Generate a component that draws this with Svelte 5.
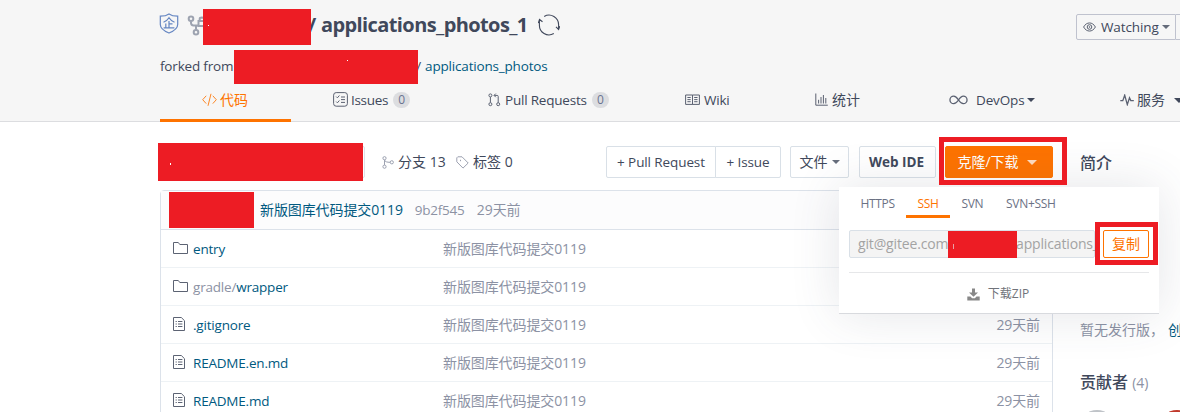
<script>
  const tabs = [
    { icon: 'code', label: '代码', active: true },
    { icon: 'issues', label: 'Issues', count: 0 },
    { icon: 'pr', label: 'Pull Requests', count: 0 },
    { icon: 'wiki', label: 'Wiki' },
    { icon: 'chart', label: '统计' },
    { icon: 'devops', label: 'DevOps', caret: true },
    { icon: 'pulse', label: '服务', caret: true }
  ];
  const message = '新版图库代码提交0119';
  const files = [
    { icon: 'folder', name: 'entry' },
    { icon: 'folder', prefix: 'gradle/', name: 'wrapper' },
    { icon: 'file', name: '.gitignore' },
    { icon: 'file', name: 'README.en.md' },
    { icon: 'file', name: 'README.md' }
  ];
</script>

{#snippet icon(name)}
  {#if name === 'code'}
    <svg class="ic" width="15" height="14" viewBox="0 0 15 14"><path d="M4.2 2.8.7 6.7l3.5 3.9M10.8 2.8l3.5 3.9-3.5 3.9M9 .8 6 12.8" /></svg>
  {:else if name === 'issues'}
    <svg class="ic" width="15" height="15" viewBox="0 0 15 15"><rect x=".6" y=".6" width="13.8" height="13.6" rx="2.6" /><path d="m3.2 4.6 1.2 1.2 2-2.3M8 5h4M8 7.6h4M3.2 9.6l1.2 1.2 2-2.3M8 10.4h4" /></svg>
  {:else if name === 'pr'}
    <svg class="ic" width="13" height="14" viewBox="0 0 13 14"><circle cx="2.4" cy="2.4" r="1.5" /><circle cx="2.4" cy="11.2" r="1.5" /><circle cx="10.2" cy="11.2" r="1.5" /><path d="M2.4 4v5.6M10.2 9.6V3.4c0-.7-.4-1-1-1H6.2M7.8.6 6 2.4l1.8 1.8" /></svg>
  {:else if name === 'wiki'}
    <svg class="ic" width="15" height="12" viewBox="0 0 15 12"><path d="M.6 1h6.9v9.4H.6zM7.5 1h6.9v9.4H7.5zM2.4 3.5h3.3M2.4 5.6h3.3M2.4 7.7h3.3M9.2 3.5h3.3M9.2 5.6h3.3M9.2 7.7h3.3" /></svg>
  {:else if name === 'chart'}
    <svg class="ic" width="13" height="13" viewBox="0 0 13 13"><path d="M.8.5v11.7h12M3.6 10.5V6.8M6 10.5V4M8.4 10.5V2M10.8 10.5V5" /></svg>
  {:else if name === 'devops'}
    <svg class="ic bold" width="19" height="10" viewBox="0 0 19 10"><path d="M9.5 5C8 2.7 6.600 1.200 4.700 1.200a3.700 3.700 0 0 0 0 7.500C6.600 8.700 8 7.200 9.500 5s2.900-3.800 4.800-3.800a3.700 3.700 0 0 1 0 7.500c-1.900 0-3.300-1.500-4.800-3.700z" /></svg>
  {:else if name === 'pulse'}
    <svg class="ic bold" width="14" height="12" viewBox="0 0 14 12"><path d="M.3 6.600h2.500L4.700 1.200l2.600 9.400L9.500 3.800l1.300 2.800h3" /></svg>
  {:else if name === 'folder'}
    <svg class="ic" width="15" height="12" viewBox="0 0 15 12"><path d="M.5 11.500V.5h4.800l1.500 2h7.700v9z" /></svg>
  {:else if name === 'file'}
    <svg class="ic" width="12" height="14" viewBox="0 0 12 14"><path d="M.5.5h7.800l3.200 3.200v9.800H.5zM2.600 4.500h1.200M5 4.500h4.400M2.600 7h1.200M5 7h4.400M2.600 9.500h1.200M5 9.500h4.400" /></svg>
  {/if}
{/snippet}

<div class="page">
  <header>
    <div class="title">
      <svg class="shield" width="20" height="21" viewBox="0 0 20 21"><path d="M10 .9c2.300 1.700 5.500 2.300 8.700 2.300v8.300c0 4.100-4 6.600-8.700 8.500-4.700-1.900-8.700-4.400-8.700-8.500V3.200C4.500 3.200 7.700 2.600 10 .9z" /><path d="M4.500 9.200C7 8.200 9 6.500 10 4.800c1 1.700 3 3.400 5.500 4.400M10 8v6.800M10 10.800h3.500M6.800 10.500v4.300M4.600 14.900h10.800" /></svg>
      <svg class="fork" width="20" height="21" viewBox="0 0 20 21"><circle cx="4" cy="3.800" r="2.300" /><circle cx="9" cy="17.200" r="2.300" /><path d="M4 6.200v1.600c0 1.600 1 2.700 2.600 2.700H9v4.300M9 10.500h3M11.500 6h7v5h-7zM12.700 6V3.700c0-1.500 4.500-1.500 4.500 0V6" /></svg>
      <h1><span class="slash">/</span>applications_photos_1</h1>
      <svg class="sync" width="22" height="22" viewBox="0 0 22 22"><path d="M6.200 2.400A9.600 9.600 0 0 1 20.600 11v4M15.800 19.600A9.600 9.600 0 0 1 1.400 11V6M18 12.800l2.600 2.600 1.200-3.200M.3 9l1.200-3.500 3 2.300" /></svg>
      <div class="watch"><svg class="ic" width="13" height="10" viewBox="0 0 13 10"><path d="M.6 5C3.500-.4 9.500-.4 12.400 5 9.500 10.400 3.500 10.400.6 5z" /><circle cx="6.500" cy="5" r="2.300" /><circle cx="6.500" cy="5" r=".4" /></svg><span>Watching</span><i class="caret"></i></div>
      <div class="watch-count"></div>
    </div>
    <div class="origin"><span>forked from</span><span class="sep">/</span><a href="#origin">applications_photos</a></div>
    <nav>
      {#each tabs as tab}
        <div class="tab {tab.icon}" class:active={tab.active}>
          {@render icon(tab.icon)}
          <span>{tab.label}</span>
          {#if tab.count !== undefined}<b class="count">{tab.count}</b>{/if}
          {#if tab.caret}<i class="caret"></i>{/if}
        </div>
      {/each}
    </nav>
  </header>

  <main>
    <section class="repo">
      <div class="toolbar">
        <div class="select"></div>
        <div class="stat branch"><svg class="ic muted" width="12" height="13" viewBox="0 0 12 13"><circle cx="2.500" cy="2.200" r="1.600" /><circle cx="2.500" cy="10.700" r="1.600" /><circle cx="9.800" cy="6.300" r="1.600" /><path d="M2.500 3.800v5.300M2.500 4c.5 1.800 2.500 2.300 5.700 2.300" /></svg><span>分支 13</span></div>
        <div class="stat"><svg class="ic muted" width="13" height="13" viewBox="0 0 13 13"><path d="M.8 1.800v4l6.200 6.300 5.200-5.100L6 .8H1.800zM4.500 3.800v1.400" /></svg><span>标签 0</span></div>
        <div class="group">
          <div class="btn pull">+ Pull Request</div>
          <div class="btn issue">+ Issue</div>
        </div>
        <div class="btn doc"><span>文件</span><i class="caret"></i></div>
        <div class="btn ide">Web IDE</div>
        <div class="btn clone"><span>克隆/下载</span><i class="caret"></i></div>
      </div>

      <div class="panel">
        <div class="commit"><a href="#commit">{message}</a><span class="hash">9b2f545</span><span>29天前</span></div>
        {#each files as f}
          <div class="row">
            {@render icon(f.icon)}
            <div class="name"><span>{f.prefix ?? ''}</span>{f.name}</div>
            <div class="msg">{message}</div>
            <div class="date">29天前</div>
          </div>
        {/each}
      </div>
    </section>

    <aside>
      <h2>简介</h2>
      <p><span>暂无发行版，</span><a href="#create">创</a></p>
      <h2 class="people">贡献者 <small>(4)</small></h2>
      <div class="avatars"><i></i><i class="red"></i></div>
    </aside>
  </main>

  <div class="menu">
    <div class="protocols"><span>HTTPS</span><span class="on">SSH</span><span>SVN</span><span>SVN+SSH</span></div>
    <div class="url"><div class="input"><span class="host">git@gitee.com</span><span>applications_</span></div><div class="copy">复制</div></div>
    <div class="zip"><svg width="13" height="13" viewBox="0 0 13 13"><path d="M5 .5h3v4h3L6.500 8.800 2 4.500h3zM.3 8.500h3.200l1.600 1.700h2.800l1.600-1.700h3.200v4H.3z" /></svg><span>下载ZIP</span></div>
  </div>

  <div class="mark owner"><i></i></div>
  <div class="mark source"><i></i></div>
  <div class="mark ref"><i></i></div>
  <div class="mark author"></div>
  <div class="mark account"><i></i></div>
  <div class="frame f-clone"></div>
  <div class="frame f-copy"></div>
</div>

<style>
  .page {
    position: relative;
    width: 1180px;
    height: 412px;
    overflow: hidden;
    background: #fff;
    color: #40485b;
    font: 14px/20px 'Open Sans', 'Noto Sans CJK SC', sans-serif;
  }
  .page * { box-sizing: border-box; }
  .page div, .page span, .page h1 { white-space: nowrap; }
  a { color: #005980; text-decoration: none; }
  .ic { flex: none; fill: none; stroke: currentColor; stroke-width: 1; opacity: .85; }
  .ic.bold { stroke-width: 1.300; }
  .ic.muted { stroke: #8c92a4; }
  .caret { flex: none; border: 4px solid transparent; border-top-color: currentColor; border-bottom: 0; }

  header { height: 122px; padding-left: 160px; background: #f6f6f6; border-bottom: 1px solid #dcdde0; }
  .title { display: flex; align-items: center; height: 50px; }
  .shield { fill: none; stroke: #6586c2; stroke-width: 1.200; margin: -3px 0 0 -1px; }
  .fork { fill: none; stroke: #9da3b0; stroke-width: 2; margin: 0 0 -1px 8px; }
  h1 { margin: 0 0 0 101px; font-size: 20px; font-weight: 700; letter-spacing: -.6px; line-height: 26px; }
  .slash { display: inline-block; width: 13px; }
  .sync { margin-left: 10px; margin-top: -1px; fill: none; stroke: #40485b; stroke-width: 1.100; }
  .watch { display: flex; align-items: center; width: 100px; height: 26px; margin: 4px 0 0 auto; padding-left: 6px; border: 1px solid #bfc2ce; border-radius: 2px 0 0 2px; font-size: 13.500px; letter-spacing: -.1px; }
  .watch span { margin: 0 3px 0 5px; }
  .watch .caret { opacity: .8; }
  .watch-count { width: 4px; height: 26px; margin-top: 4px; border: solid #bfc2ce; border-width: 1px 0; }
  .origin { display: flex; align-items: center; height: 32px; font-size: 13.500px; letter-spacing: -.18px; }
  .sep { margin: 0 4px 0 183px; }
  nav { display: grid; grid-template-columns: 131px 155px 197px 130px 134px 172px 101px; height: 40px; font-size: 13.500px; letter-spacing: -.2px; }
  .tab { display: flex; align-items: center; padding: 0 0 4px 42px; }
  .tab > :global(svg) { margin-top: -1px; }
  .tab span { margin-left: 4px; }
  .tab .caret { margin-left: 3px; }
  .tab.code span, .tab.chart span, .tab.pulse span { font-size: 14px; letter-spacing: 0; }
  .tab.code span { margin-left: 3px; }
  .tab.issues span { margin-left: 3px; letter-spacing: -.3px; }
  .tab.devops span { margin-left: 8px; }
  .tab.devops span { letter-spacing: -.15px; }
  .tab.pulse span { margin-left: 3px; }
  .tab.pulse { padding-left: 41px; }
  .tab.pulse .caret { margin-left: 9px; border-width: 5px 5px 0; }
  .tab.active { color: #fe7300; border-bottom: 3px solid #fe7300; padding-bottom: 1px; }
  .count { width: 17px; height: 16px; margin-left: 5px; border-radius: 8px; background: #dcdde0; color: #6a7390; font-size: 12px; font-weight: 400; line-height: 16px; text-align: center; }

  main { display: flex; padding: 24px 0 0 160px; }
  .repo { width: 893px; }
  .toolbar { display: flex; align-items: center; height: 32px; margin-bottom: 12px; }
  .select { width: 205px; height: 32px; margin-right: 17px; border: 1px solid #dce2e8; border-radius: 2px; }
  .stat { display: flex; align-items: center; gap: 4px; }
  .branch { width: 74px; }
  .btn { display: flex; align-items: center; justify-content: center; height: 32px; border: 1px solid #d9e0e7; border-radius: 2px; background: #fff; font-size: 13.500px; letter-spacing: -.1px; }
  .group { display: flex; margin-left: auto; }
  .pull { width: 110px; border-radius: 2px 0 0 2px; }
  .issue { width: 66px; margin-left: -1px; border-radius: 0 2px 2px 0; }
  .doc { width: 59px; margin-left: 9px; gap: 4px; font-size: 14px; letter-spacing: 0; }
  .doc .caret { opacity: .8; }
  .ide { width: 77px; margin: 0 9px 0 10px; padding-right: 2px; font-weight: 700; letter-spacing: 0; }
  .clone { width: 108px; gap: 8px; padding-right: 4px; border-color: #fe7300; background: #fe7300; color: #fff; font-size: 14px; letter-spacing: 0; }
  .clone .caret { border-width: 5px 5px 0; opacity: .75; }

  .panel { height: 260px; border: 1px solid #dce2ea; border-radius: 4px 4px 0 0; }
  .commit { display: flex; align-items: center; height: 39px; padding-left: 99px; border-bottom: 1px solid #dce2ea; background: #fcfcfd; color: #8c92a4; letter-spacing: -.1px; }
  .commit .hash { width: 62px; margin-left: 12px; font-size: 13.500px; letter-spacing: -.25px; }
  .row { display: grid; grid-template-columns: 20px 250px 1fr auto; align-items: center; height: 38px; padding: 0 12px; border-bottom: 1px solid #eef2f5; color: #8c92a4; letter-spacing: -.1px; }
  .row > :global(svg) { margin-top: -2px; color: #40485b; }
  .name { color: #005980; font-size: 13.500px; letter-spacing: -.2px; }
  .name span { color: #8c92a4; }

  aside { width: 100px; margin-left: 27px; }
  h2 { margin: 6px 0 0; font-size: 16px; font-weight: 500; line-height: 22px; white-space: nowrap; }
  aside p { display: flex; gap: 4px; margin: 146px 0 0; color: #8c92a4; white-space: nowrap; }
  h2.people { margin-top: 31px; }
  small { color: #8c92a4; font-size: 14px; font-weight: 400; }
  .avatars { display: flex; gap: 44px; margin: 16px 0 0 -1px; }
  .avatars i { flex: none; width: 36px; height: 36px; border-radius: 50%; background: #bfc3c8; }
  .avatars .red { background: #c0392b; }

  .menu { position: absolute; left: 839px; top: 187px; width: 320px; height: 127px; padding: 0 10px; border-bottom: 1px solid #d8dade; background: #fff; box-shadow: 0 0 50px rgba(64, 72, 91, .14); }
  .protocols { display: flex; height: 31px; color: #6b7184; font-size: 12px; line-height: 33px; letter-spacing: -.3px; }
  .protocols span { padding: 0 11.400px; }
  .protocols .on { color: #fe7300; border-bottom: 3px solid #fe7300; }
  .url { display: flex; justify-content: space-between; margin-top: 12px; height: 28px; }
  .input { display: flex; width: 246px; padding-left: 8px; border: 1px solid #d9e0e7; border-radius: 2px; background: #f4f4f4; color: #a3a3a3; line-height: 26px; letter-spacing: -.15px; }
  .host { flex: none; width: 158px; }
  .copy { width: 46px; border: 1px solid #fe7300; border-radius: 2px; color: #fe7300; line-height: 26px; text-align: center; }
  .zip { display: flex; align-items: center; justify-content: center; gap: 8px; height: 41px; margin-top: 14px; padding: 2px 2px 0 0; border-top: 1px solid #e6e7e9; color: #70737a; font-size: 12px; }
  .zip svg { fill: #888; }

  .mark { position: absolute; background: #ed1c24; }
  .mark i { position: absolute; width: 1px; height: 1px; background: #fff; }
  .owner { left: 203px; top: 9px; width: 108px; height: 36px; }
  .owner i { left: 5px; top: 16px; }
  .source { left: 234px; top: 50px; width: 184px; height: 34px; }
  .source i { left: 113px; top: 10px; }
  .ref { left: 158px; top: 143px; width: 205px; height: 38px; }
  .ref i { left: 12px; top: 20px; height: 2px; }
  .author { left: 169px; top: 192px; width: 85px; height: 36px; }
  .account { left: 948px; top: 231px; width: 69px; height: 27px; }
  .account i { left: 5px; top: 13px; height: 5px; background: #e8a0a4; }
  .frame { position: absolute; border: 5px solid #ed1c24; }
  .f-clone { left: 939px; top: 137px; width: 128px; height: 48px; }
  .f-copy { left: 1095px; top: 222px; width: 63px; height: 43px; }
</style>
